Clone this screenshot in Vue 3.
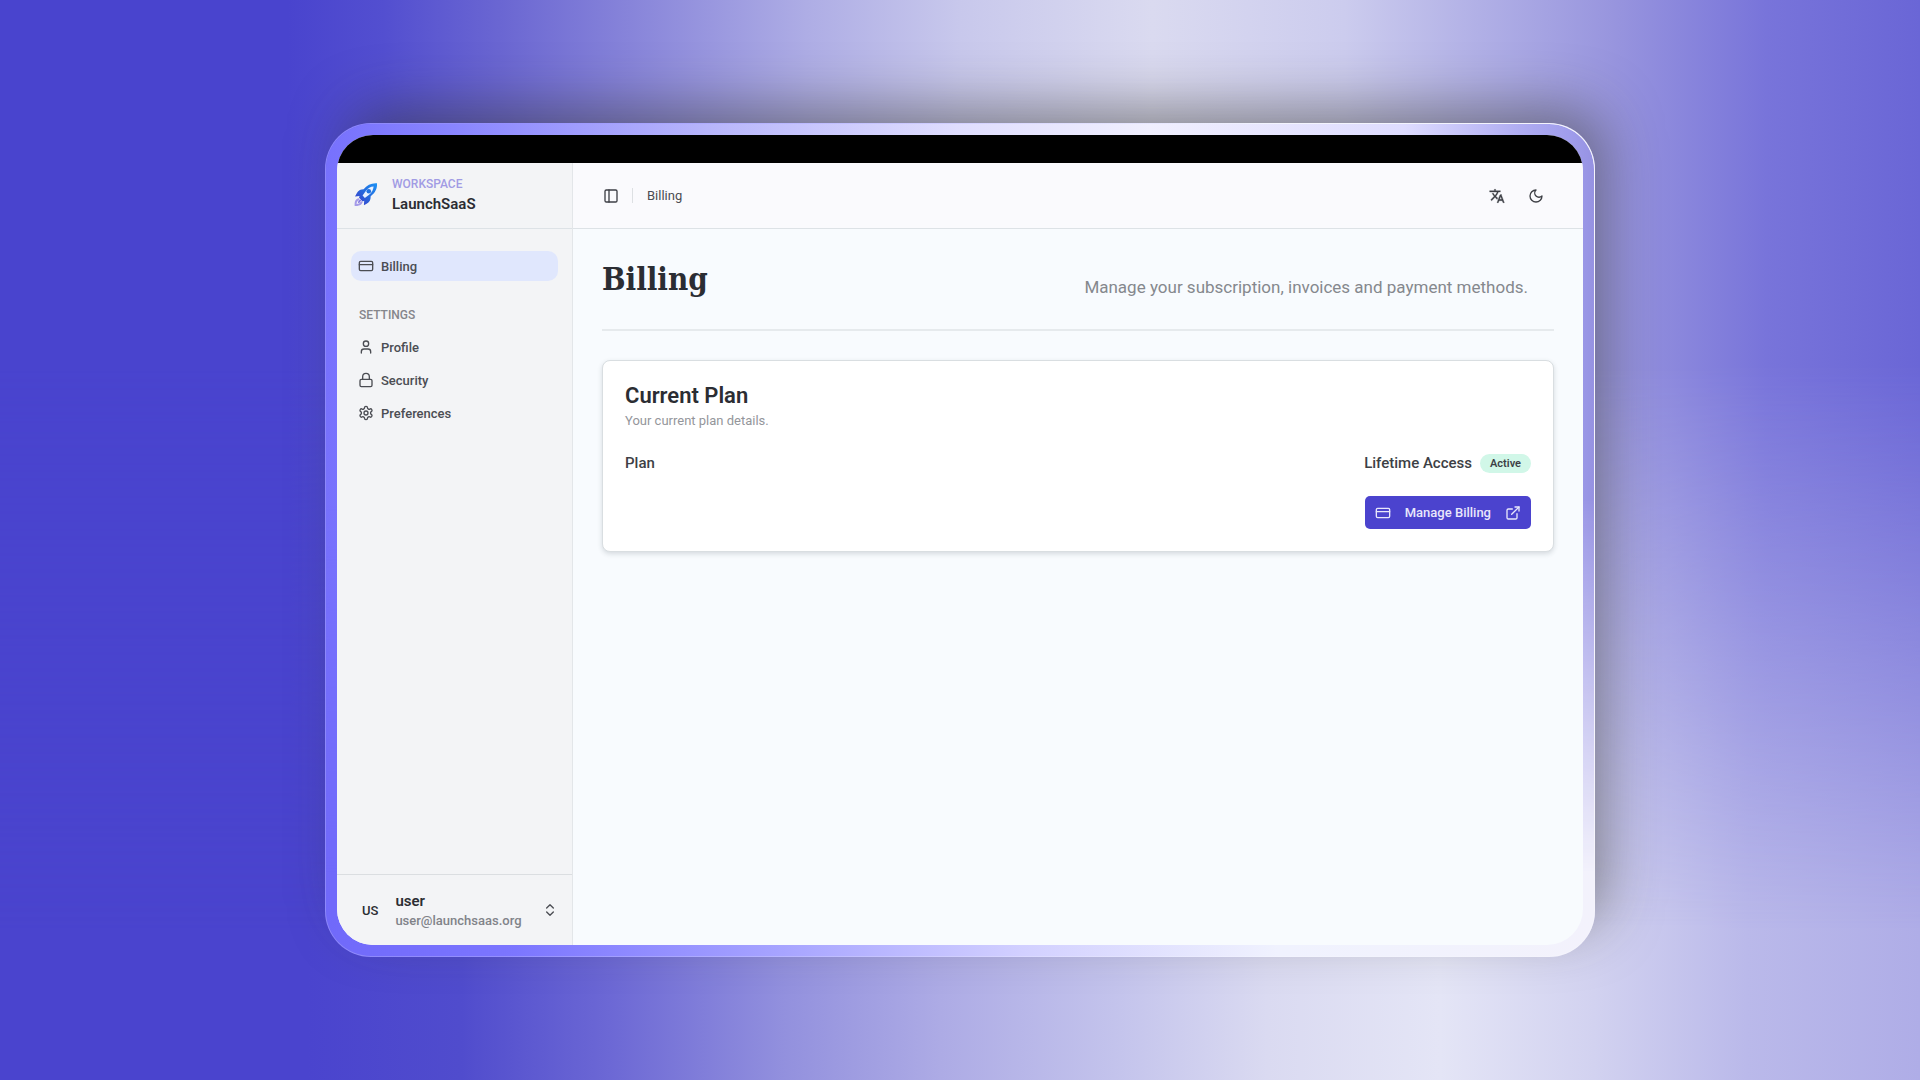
<template>
  <div class="stage">
    <div class="frame">
      <div class="screen">
        <div class="camera-bar"></div>

        <div class="app-shell">
          <aside class="sidebar">
            <div class="brand">
              <svg class="brand-logo" viewBox="0 0 24 24" fill="none">
                <defs>
                  <linearGradient id="rocketBody" x1="1" y1="0" x2="0" y2="1">
                    <stop offset="0" stop-color="#1b93f5" />
                    <stop offset="0.5" stop-color="#2668dc" />
                    <stop offset="1" stop-color="#4038c8" />
                  </linearGradient>
                </defs>
                <path d="M23 1.2C17.5.8 13 2.8 9.6 7.2L7.6 7.4C5 7.8 3.4 9.6 1 14.6l4.6-.5-.6 1.5 3.6 3.8 1.6-.6-.3 4.4c4.2-2 6.4-4 6.6-6.8l.2-2.2C21.4 10.6 23.4 6.4 23 1.2Z" fill="url(#rocketBody)" />
                <path d="M19.6 4.6c-3.2.2-5.6 1.6-7.6 4.2L8.6 13.6l2.2 2.4 4.3-3.2c2.7-2.3 4.3-4.9 4.5-8.2Z" fill="#e9f2ff" />
                <circle cx="14.8" cy="9.3" r="2.3" fill="#2272e0" />
                <path d="M4.6 17.2c-2.4.8-3.2 2.6-3 5.8 3.2.2 5-.6 6-2.8" stroke="#a59be9" stroke-width="2" stroke-linecap="round" />
                <path d="M4.8 20.2c.3-1 .8-1.5 1.6-1.8" stroke="#8379df" stroke-width="1.6" stroke-linecap="round" />
              </svg>
              <div class="brand-text">
                <span class="brand-label">WORKSPACE</span>
                <span class="brand-name">LaunchSaaS</span>
              </div>
            </div>

            <nav class="side-nav">
              <a href="#billing" class="nav-item active">
                <svg class="icon" viewBox="0 0 24 24">
                  <rect width="20" height="14" x="2" y="5" rx="2" />
                  <path d="M2 10h20" />
                </svg>
                Billing
              </a>

              <h2 class="nav-heading">SETTINGS</h2>
              <a v-for="item in settings" :key="item.label" :href="item.href" class="nav-item">
                <svg class="icon" viewBox="0 0 24 24">
                  <path v-for="d in item.paths" :key="d" :d="d" />
                </svg>
                {{ item.label }}
              </a>
            </nav>

            <button type="button" class="user-menu">
              <span class="avatar">US</span>
              <span class="user-text">
                <span class="user-name">user</span>
                <span class="user-email">user@launchsaas.org</span>
              </span>
              <svg class="icon" viewBox="0 0 24 24">
                <path d="m7 15 5 5 5-5" />
                <path d="m7 9 5-5 5 5" />
              </svg>
            </button>
          </aside>

          <div class="content">
            <header class="topbar">
              <button type="button" class="icon-button" aria-label="Toggle sidebar">
                <svg class="icon" viewBox="0 0 24 24">
                  <rect width="18" height="18" x="3" y="3" rx="2" />
                  <path d="M9 3v18" />
                </svg>
              </button>
              <span class="divider"></span>
              <span class="crumb">Billing</span>
              <div class="topbar-actions">
                <button type="button" class="icon-button" aria-label="Language">
                  <svg class="icon solid" viewBox="0 0 24 24">
                    <path d="M12.87 15.07l-2.54-2.51.03-.03A17.52 17.52 0 0 0 14.07 6H17V4h-7V2H8v2H1v2h11.17C11.5 7.92 10.44 9.75 9 11.35 8.07 10.32 7.3 9.19 6.69 8h-2c.73 1.63 1.73 3.17 2.98 4.56l-5.09 5.02L4 19l5-5 3.11 3.11.76-2.04zM18.5 10h-2L12 22h2l1.12-3h4.75L21 22h2l-4.5-12zm-2.62 7l1.62-4.33L19.12 17h-3.24z" />
                  </svg>
                </button>
                <button type="button" class="icon-button" aria-label="Dark mode">
                  <svg class="icon" viewBox="0 0 24 24">
                    <path d="M12 3a6 6 0 0 0 9 9 9 9 0 1 1-9-9Z" />
                  </svg>
                </button>
              </div>
            </header>

            <main class="page">
              <div class="page-head">
                <h1>Billing</h1>
                <p>Manage your subscription, invoices and payment methods.</p>
              </div>

              <section class="card">
                <h2>Current Plan</h2>
                <p class="card-sub">Your current plan details.</p>
                <div class="plan-row">
                  <span>Plan</span>
                  <span class="plan-value">
                    Lifetime Access
                    <span class="badge">Active</span>
                  </span>
                </div>
                <button type="button" class="manage">
                  <svg class="icon" viewBox="0 0 24 24">
                    <rect width="20" height="14" x="2" y="5" rx="2" />
                    <path d="M2 10h20" />
                  </svg>
                  Manage Billing
                  <svg class="icon" viewBox="0 0 24 24">
                    <path d="M15 3h6v6" />
                    <path d="M10 14 21 3" />
                    <path d="M18 13v6a2 2 0 0 1-2 2H5a2 2 0 0 1-2-2V8a2 2 0 0 1 2-2h6" />
                  </svg>
                </button>
              </section>
            </main>
          </div>
        </div>
      </div>
    </div>
  </div>
</template>

<script setup>
const settings = [
  {
    label: 'Profile',
    href: '#profile',
    paths: ['M19 21v-2a4 4 0 0 0-4-4H9a4 4 0 0 0-4 4v2', 'M8 7a4 4 0 1 0 8 0a4 4 0 1 0-8 0']
  },
  {
    label: 'Security',
    href: '#security',
    paths: [
      'M5 11h14a2 2 0 0 1 2 2v7a2 2 0 0 1-2 2H5a2 2 0 0 1-2-2v-7a2 2 0 0 1 2-2Z',
      'M7 11V7a5 5 0 0 1 10 0v4'
    ]
  },
  {
    label: 'Preferences',
    href: '#preferences',
    paths: [
      'M12.22 2h-.44a2 2 0 0 0-2 2v.18a2 2 0 0 1-1 1.73l-.43.25a2 2 0 0 1-2 0l-.15-.08a2 2 0 0 0-2.73.73l-.22.38a2 2 0 0 0 .73 2.73l.15.1a2 2 0 0 1 1 1.72v.51a2 2 0 0 1-1 1.74l-.15.09a2 2 0 0 0-.73 2.73l.22.38a2 2 0 0 0 2.73.73l.15-.08a2 2 0 0 1 2 0l.43.25a2 2 0 0 1 1 1.73V20a2 2 0 0 0 2 2h.44a2 2 0 0 0 2-2v-.18a2 2 0 0 1 1-1.73l.43-.25a2 2 0 0 1 2 0l.15.08a2 2 0 0 0 2.73-.73l.22-.39a2 2 0 0 0-.73-2.73l-.15-.08a2 2 0 0 1-1-1.74v-.5a2 2 0 0 1 1-1.74l.15-.09a2 2 0 0 0 .73-2.73l-.22-.38a2 2 0 0 0-2.73-.73l-.15.08a2 2 0 0 1-2 0l-.43-.25a2 2 0 0 1-1-1.73V4a2 2 0 0 0-2-2z',
      'M9 12a3 3 0 1 0 6 0a3 3 0 1 0-6 0'
    ]
  }
]
</script>

<style>
body {
  margin: 0;
}
</style>

<style scoped>
* {
  box-sizing: border-box;
}

.stage {
  position: relative;
  isolation: isolate;
  display: flex;
  min-height: 100vh;
  padding: 123px 325px;
  font-family: Roboto, 'Noto Sans', sans-serif;
  color: #2b2d33;
  background: linear-gradient(to right, #4a44ce 0%, #4a44ce 16%, #504ccd 24%, #6d69d5 32%, #9391de 41%, #adabe5 49%, #c3c3ec 58%, #dadaf1 66%, #e4e5f6 75%, #d2d2f0 83%, #bab9ea 91%, #afade7 100%);
}

/* upper half of the backdrop, fading into the lower one */
.stage::before {
  content: '';
  position: absolute;
  inset: 0;
  z-index: -1;
  background: linear-gradient(to right, #4944ce 0%, #4944ce 15%, #534fd0 20%, #6a66d2 26%, #8885da 33%, #aeade5 42%, #c8c8ec 50%, #dadaf0 60%, #ccccee 70%, #b1b0e6 77%, #9895de 84%, #7874da 92%, #6a66d6 100%);
  mask-image: linear-gradient(to bottom, #000 34%, transparent 86%);
}

.frame {
  position: relative;
  flex: 1;
  display: flex;
  padding: 11px;
  border: 1px solid rgba(255, 255, 255, 0.2);
  border-radius: 46px;
  background: linear-gradient(to right, #7069fa 0%, #7c76ff 15%, #a5a2ff 35%, #d2d0ff 55%, #f0f2fe 75%, #f3f2fc 100%) border-box;
  box-shadow: 16px -22px 56px -8px rgba(50, 50, 40, 0.5);
}

.frame::before {
  content: '';
  position: absolute;
  inset: 0;
  border-radius: 45px;
  background: linear-gradient(to right, #7771fd 0%, #8985ff 10%, #b7b5fb 30%, #e0defe 50%, #f0effe 65%, #dedcff 85%, #b0adf2 94%, #a09dec 98%, #9692e2 100%);
  mask-image: linear-gradient(to bottom, #000 45%, transparent 90%);
}

.screen {
  position: relative;
  flex: 1;
  display: flex;
  flex-direction: column;
  border-radius: 36px;
  overflow: hidden;
  background: #f8fbfe;
}

.camera-bar {
  height: 28px;
  background: #000;
}

.app-shell {
  flex: 1;
  display: flex;
}

.icon {
  width: 16px;
  height: 16px;
  flex: none;
  fill: none;
  stroke: currentColor;
  stroke-width: 2;
  stroke-linecap: round;
  stroke-linejoin: round;
}

.icon.solid {
  fill: currentColor;
  stroke-width: 0.5;
}

.sidebar {
  width: 236px;
  display: flex;
  flex-direction: column;
  background: #f3f4f6;
  border-right: 1px solid #e3e6e9;
}

.brand {
  height: 66px;
  display: flex;
  align-items: center;
  gap: 14px;
  padding: 0 17px 4px;
  border-bottom: 1px solid #dde2e6;
}

.brand-logo {
  width: 24px;
  height: 24px;
}

.brand-text,
.user-text {
  display: flex;
  flex-direction: column;
  line-height: 20px;
}

.brand-label {
  font-size: 12px;
  font-weight: 500;
  color: #a19be4;
}

.brand-name,
.user-name {
  font-size: 15px;
  font-weight: 600;
}

.side-nav {
  flex: 1;
  display: flex;
  flex-direction: column;
  gap: 3px;
  padding: 22px 14px;
}

.nav-item {
  height: 30px;
  display: flex;
  align-items: center;
  gap: 7px;
  padding: 0 7px;
  border-radius: 10px;
  font-size: 13px;
  font-weight: 500;
  color: #4b4d53;
  text-decoration: none;
}

.nav-item.active {
  background: #e0e7fd;
}

.nav-heading {
  margin: 22px 8px 5px;
  font-size: 12px;
  line-height: 18px;
  font-weight: 500;
  color: #85868b;
}

.user-menu {
  height: 71px;
  display: flex;
  align-items: center;
  gap: 17px;
  padding: 0 14px 0 25px;
  border: 0;
  border-top: 1px solid #dbdee1;
  background: none;
  font-family: inherit;
  color: inherit;
  text-align: left;
}

.user-menu .icon {
  color: #4b4d53;
}

.avatar {
  font-size: 13px;
  font-weight: 500;
}

.user-text {
  flex: 1;
  padding-top: 2px;
}

.user-email {
  font-size: 13px;
  font-weight: 500;
  color: #818389;
}

.content {
  flex: 1;
  display: flex;
  flex-direction: column;
}

.topbar {
  height: 66px;
  display: flex;
  align-items: center;
  padding: 0 33px 0 24px;
  background: #fafafd;
  border-bottom: 1px solid #dde2e6;
}

.icon-button {
  display: flex;
  padding: 6px;
  border: 0;
  background: none;
  color: #3d3f45;
}

.divider {
  width: 1px;
  height: 15px;
  margin: 0 14px 0 7px;
  background: #dde0e3;
}

.crumb {
  font-size: 13px;
  color: #4b4d53;
}

.topbar-actions {
  display: flex;
  gap: 11px;
  margin-left: auto;
}

.page {
  flex: 1;
  padding: 26px 29px;
}

.page-head {
  display: flex;
  align-items: center;
  justify-content: space-between;
  padding: 0 26px 26px 0;
  border-bottom: 2px solid #e6eaed;
}

.page-head h1 {
  margin: 0;
  font-family: 'DejaVu Serif Condensed', 'DejaVu Serif', serif;
  font-size: 31px;
  line-height: 48px;
  font-weight: 700;
}

.page-head p {
  margin: 16px 0 0;
  font-size: 17px;
  line-height: 24px;
  color: #85888d;
}

.card {
  display: flex;
  flex-direction: column;
  margin-top: 29px;
  padding: 22px;
  border: 1px solid #d9dee1;
  border-radius: 8px;
  background: #fff;
  box-shadow: 0 2px 5px rgba(40, 50, 60, 0.16);
}

.card h2 {
  margin: 0;
  font-size: 22px;
  line-height: 26px;
  font-weight: 600;
}

.card-sub {
  margin: 3px 0 22px;
  font-size: 13px;
  line-height: 18px;
  color: #94969b;
}

.plan-row {
  display: flex;
  align-items: center;
  justify-content: space-between;
  font-size: 15px;
  line-height: 22px;
  font-weight: 500;
  color: #3d3f45;
}

.plan-value {
  display: flex;
  align-items: center;
  gap: 8px;
}

.badge {
  padding: 0 10px;
  border-radius: 10px;
  background: #d1f7e8;
  font-size: 11px;
  line-height: 19px;
  font-weight: 600;
}

.manage {
  align-self: flex-end;
  height: 33px;
  display: flex;
  align-items: center;
  gap: 14px;
  margin-top: 22px;
  padding: 0 10px;
  border: 0;
  border-radius: 5px;
  background: #4b43ce;
  color: #e8e7fb;
  font-family: inherit;
  font-size: 13px;
  font-weight: 500;
}
</style>
